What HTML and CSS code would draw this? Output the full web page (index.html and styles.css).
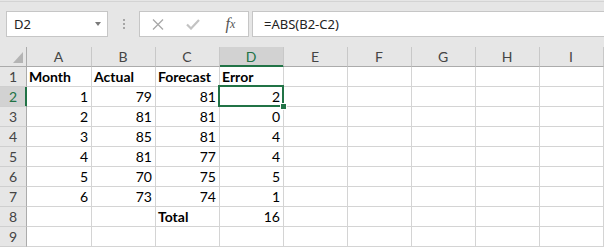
FILE: index.html
```html
<!DOCTYPE html>
<html lang="en">
<head>
  <meta charset="UTF-8" />
  <title>Forecast Error</title>
  <link rel="stylesheet" href="styles.css">
</head>
<body>

  <!-- Formula bar -->
  <div class="toolbar">
    <div class="namebox">
      <span>D2</span>
      <span class="caret"></span>
    </div>
    <div class="grip"><i></i><i></i><i></i></div>
    <div class="fbtns">
      <span class="fbtn">
        <svg width="12" height="11" viewBox="0 0 12 11"><path d="M1 0.5 L11 10.5 M11 0.5 L1 10.5" stroke="#a8a8a8" stroke-width="1.3" fill="none"/></svg>
      </span>
      <span class="fbtn">
        <svg width="14" height="11" viewBox="0 0 14 11"><path d="M1 5.5 L5 9.5 L13 1" stroke="#c3c3c3" stroke-width="2.2" fill="none"/></svg>
      </span>
      <span class="fbtn fx">f<small>x</small></span>
    </div>
    <div class="formula">=ABS(B2-C2)</div>
  </div>

  <!-- Sheet -->
  <div class="sheet">
    <div class="corner"><span class="tri"></span></div>
    <div class="ch">A</div>
    <div class="ch">B</div>
    <div class="ch">C</div>
    <div class="ch sel">D</div>
    <div class="ch">E</div>
    <div class="ch">F</div>
    <div class="ch">G</div>
    <div class="ch">H</div>
    <div class="ch">I</div>

    <div class="rh">1</div>
    <div class="b">Month</div><div class="b">Actual</div><div class="b">Forecast</div><div class="b">Error</div>
    <div></div><div></div><div></div><div></div><div></div>

    <div class="rh sel">2</div>
    <div class="n">1</div><div class="n">79</div><div class="n">81</div>
    <div class="n active">2<span class="frame"><span class="handle"></span></span></div>
    <div></div><div></div><div></div><div></div><div></div>

    <div class="rh">3</div>
    <div class="n">2</div><div class="n">81</div><div class="n">81</div><div class="n">0</div>
    <div></div><div></div><div></div><div></div><div></div>

    <div class="rh">4</div>
    <div class="n">3</div><div class="n">85</div><div class="n">81</div><div class="n">4</div>
    <div></div><div></div><div></div><div></div><div></div>

    <div class="rh">5</div>
    <div class="n">4</div><div class="n">81</div><div class="n">77</div><div class="n">4</div>
    <div></div><div></div><div></div><div></div><div></div>

    <div class="rh">6</div>
    <div class="n">5</div><div class="n">70</div><div class="n">75</div><div class="n">5</div>
    <div></div><div></div><div></div><div></div><div></div>

    <div class="rh">7</div>
    <div class="n">6</div><div class="n">73</div><div class="n">74</div><div class="n">1</div>
    <div></div><div></div><div></div><div></div><div></div>

    <div class="rh">8</div>
    <div></div><div></div><div class="b">Total</div><div class="n">16</div>
    <div></div><div></div><div></div><div></div><div></div>

    <div class="rh">9</div>
    <div></div><div></div><div></div><div></div>
    <div></div><div></div><div></div><div></div><div></div>
  </div>

</body>
</html>
```

FILE: styles.css
```css
* {
  margin: 0; padding: 0; box-sizing: border-box;
}
body {
  background: #e6e6e6;
  font-family: Lato, sans-serif;
  color: #000;
  overflow: hidden;
}
.toolbar {
  margin-top: 1px;
  border-top: 1px solid #d4d4d4;
  padding: 9px 0 10px 6px;
  display: flex;
  align-items: center;
}
.namebox, .fbtns, .formula {
  height: 26px;
  background: #fff;
  border: 1px solid #c6c6c6;
  font-family: "Noto Sans", sans-serif;
  font-size: 13px;
  color: #222;
}
.namebox {
  width: 102px;
  padding: 0 6px 0 7px;
  display: flex;
  align-items: center;
  justify-content: space-between;
}
.caret {
  border-left: 3.5px solid transparent;
  border-right: 3.5px solid transparent;
  border-top: 4px solid #7a7a7a;
}
.grip {
  width: 31px;
  display: flex;
  flex-direction: column;
  align-items: center;
  gap: 2px;
  padding-left: 1px;
}
.grip i {
  width: 2px;
  height: 2px;
  background: #a6a6a6;
}
.fbtns {
  width: 110px;
  display: flex;
}
.fbtn {
  flex: 1;
  display: flex;
  align-items: center;
  justify-content: center;
}
.fx {
  font-family: "Liberation Serif", serif;
  font-style: italic;
  font-size: 16px;
  color: #555;
  padding-left: 2px;
}
.fx small {
  font-size: 12px;
}
.formula {
  flex: 1;
  margin-left: 3px;
  border-right: none;
  padding-left: 11px;
  line-height: 24px;
}

.sheet {
  display: grid;
  grid-template-columns: 27px 65px repeat(8, 64px);
  grid-auto-rows: 20px;
  font-size: 14px;
}
.sheet > div {
  background: #fff;
  border-right: 1px solid #d4d4d4;
  border-bottom: 1px solid #d4d4d4;
  line-height: 19px;
  padding: 0 3px 0 2px;
  white-space: nowrap;
}
.sheet > .corner {
  background: #e6e6e6;
  border-right-color: #ababab;
  border-bottom-color: #ababab;
  position: relative;
}
.tri {
  position: absolute;
  right: 3px;
  bottom: 3px;
  border-left: 10px solid transparent;
  border-bottom: 11px solid #b4b4b4;
}
.sheet > .ch {
  background: #e6e6e6;
  border-right-color: #c8c8c8;
  border-bottom-color: #ababab;
  text-align: center;
  color: #444;
}
.sheet > .rh {
  background: #e6e6e6;
  border-right-color: #ababab;
  border-bottom-color: #cfcfcf;
  text-align: center;
  padding: 0;
  color: #444;
}
.sheet > .ch.sel {
  background: #d2d2d2;
  border-bottom-color: #217346;
  box-shadow: inset 0 -1px 0 #217346;
  color: #217346;
}
.sheet > .rh.sel {
  background: #d2d2d2;
  border-right-color: #217346;
  box-shadow: inset -1px 0 0 #217346;
  color: #217346;
}
.b {
  font-weight: bold;
}
.n {
  text-align: right;
}
.active {
  position: relative;
}
.frame {
  position: absolute;
  top: -2px;
  left: -2px;
  right: -1px;
  bottom: -1px;
  border: 2px solid #217346;
}
.handle {
  position: absolute;
  right: -5px;
  bottom: -5px;
  width: 7px;
  height: 7px;
  background: #217346;
  border: 1px solid #fff;
}
```
